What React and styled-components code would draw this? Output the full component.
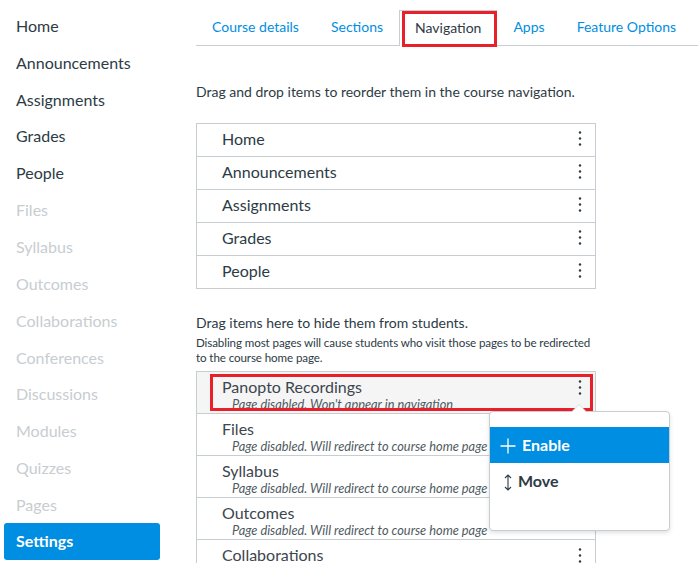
import React from 'react';
import styled, { createGlobalStyle } from 'styled-components';

const Global = createGlobalStyle`
  html, body {
    margin: 0;
    padding: 0;
    overflow: hidden;
    background: #fff;
    font-family: Lato, "Open Sans", sans-serif;
    color: #2d3b45;
  }
`;

const Page = styled.div`
  display: flex;
  width: 698px;
  height: 563px;
  overflow: hidden;
`;

const Sidebar = styled.nav`
  width: 156px;
  padding: 7px 36px 0 4px;
  flex-shrink: 0;
`;

const NavItem = styled.div`
  height: 36.85px;
  display: flex;
  align-items: center;
  padding-left: 12px;
  font-size: 16px;
  border-radius: 3px;
  color: ${p => (p.$disabled ? '#c7cdd1' : '#2d3b45')};
  ${p => p.$active && `
    background: #008ee2;
    color: #fff;
    font-weight: 700;
    padding-bottom: 2px;
    box-sizing: border-box;
  `}
`;

const Main = styled.main`
  flex: 1;
  min-width: 0;
`;

const TabBar = styled.div`
  display: flex;
  align-items: flex-end;
  height: 45px;
  border-bottom: 1px solid #c7cdd1;
`;

const Tab = styled.div`
  position: relative;
  height: 35px;
  padding: 0 16px 2px;
  box-sizing: border-box;
  display: flex;
  align-items: center;
  font-size: 14px;
  white-space: nowrap;
  color: ${p => (p.$active ? '#2d3b45' : '#008ee2')};
  ${p => p.$active && `
    background: #fff;
    border: 1px solid #c7cdd1;
    border-bottom: none;
    height: 36px;
    margin-bottom: -1px;
    padding: 0 15px 2px;
    &::after {
      content: '';
      position: absolute;
      left: 2px;
      right: -1px;
      top: 0;
      bottom: -1px;
      border: 3px solid #e8202a;
    }
  `}
`;

const Content = styled.div`
  width: 400px;
`;

const Lead = styled.p`
  margin: ${p => p.$top || 0}px 0 0;
  font-size: 14px;
  line-height: 20px;
`;

const Note = styled.p`
  margin: 2px 0 0;
  font-size: 11.6px;
  letter-spacing: -0.1px;
  line-height: 15px;
`;

const List = styled.div`
  position: relative;
  margin-top: ${p => p.$top}px;
  border: 1px solid #c7cdd1;
  border-bottom: ${p => (p.$open ? 'none' : '1px solid #c7cdd1')};
`;

const Row = styled.div`
  height: 32px;
  box-sizing: border-box;
  padding: 0 13px 3px 25px;
  display: flex;
  align-items: center;
  justify-content: space-between;
  font-size: 16px;
  & + & {
    border-top: 1px solid #c7cdd1;
    height: 33px;
  }
`;

const HiddenRow = styled.div`
  position: relative;
  height: 41px;
  padding: 5px 13px 0 25px;
  box-sizing: border-box;
  display: flex;
  justify-content: space-between;
  align-items: flex-start;
  background: ${p => (p.$marked ? '#f5f5f5' : '#fff')};
  & + & {
    border-top: 1px solid #c7cdd1;
    height: 42px;
  }
  ${p => p.$marked && `
    &::after {
      content: '';
      position: absolute;
      left: 13px;
      right: 2px;
      top: 2px;
      bottom: 2px;
      border: 3px solid #e8202a;
    }
  `}
`;

const RowTitle = styled.div`
  font-size: 16px;
  line-height: 20px;
  color: #3d464d;
`;

const RowSub = styled.div`
  font-size: 12.8px;
  line-height: 14px;
  font-style: italic;
  color: #4f5a61;
  padding-left: 10px;
  white-space: nowrap;
`;

const KebabWrap = styled.span`
  display: flex;
  height: 20px;
  align-items: center;
`;

const Kebab = () => (
  <KebabWrap>
    <svg width="4" height="15" viewBox="0 0 4 15">
      <circle cx="2" cy="1.5" r="1.2" fill="#2d3b45" />
      <circle cx="2" cy="7.5" r="1.2" fill="#2d3b45" />
      <circle cx="2" cy="13.5" r="1.2" fill="#2d3b45" />
    </svg>
  </KebabWrap>
);

const Menu = styled.div`
  position: absolute;
  left: 292px;
  top: 39px;
  width: 179px;
  height: 103px;
  padding-top: 15px;
  background: #fff;
  border: 1px solid #c7cdd1;
  border-radius: 4px;
  box-shadow: 0 2px 4px rgba(0, 0, 0, 0.12);
  z-index: 2;
  &::before, &::after {
    content: '';
    position: absolute;
    left: 82px;
    border: 7px solid transparent;
    border-top: none;
  }
  &::before {
    top: -8px;
    border-bottom: 7px solid #d7dbde;
  }
  &::after {
    top: -7px;
    border-bottom: 7px solid #fff;
  }
`;

const MenuItem = styled.div`
  height: 36px;
  box-sizing: border-box;
  padding: 0 0 2px ${p => (p.$narrow ? 14 : 10)}px;
  display: flex;
  align-items: center;
  gap: 6px;
  font-size: 16px;
  font-weight: 700;
  background: ${p => (p.$active ? '#008ee2' : 'transparent')};
  color: ${p => (p.$active ? '#fff' : '#2d3b45')};
`;

const Icon = styled.span`
  display: flex;
  width: ${p => p.$w}px;
  justify-content: center;
  padding-top: 4px;
`;

const PlusIcon = () => (
  <Icon $w={16}>
    <svg width="16" height="16" viewBox="0 0 16 16">
      <path d="M8 0.5V15.5M0.5 8H15.5" stroke="#fff" strokeWidth="1.3" fill="none" />
    </svg>
  </Icon>
);

const MoveIcon = () => (
  <Icon $w={8}>
    <svg width="8" height="17" viewBox="0 0 8 17">
      <path d="M4 1V16M1 4L4 1L7 4M1 13L4 16L7 13" stroke="#2d3b45" strokeWidth="1.1" fill="none" />
    </svg>
  </Icon>
);

const nav = [
  ['Home'], ['Announcements'], ['Assignments'], ['Grades'], ['People'],
  ['Files', 1], ['Syllabus', 1], ['Outcomes', 1], ['Collaborations', 1],
  ['Conferences', 1], ['Discussions', 1], ['Modules', 1], ['Quizzes', 1], ['Pages', 1],
];

const tabs = ['Course details', 'Sections', 'Navigation', 'Apps', 'Feature Options'];
const enabled = ['Home', 'Announcements', 'Assignments', 'Grades', 'People'];
const redirect = 'Page disabled. Will redirect to course home page';
const hidden = [
  ['Panopto Recordings', "Page disabled. Won't appear in navigation", true],
  ['Files', redirect],
  ['Syllabus', redirect],
  ['Outcomes', redirect],
  ['Collaborations', redirect],
];

export default function App() {
  return (
    <Page>
      <Global />
      <Sidebar>
        {nav.map(([label, off]) => (
          <NavItem key={label} $disabled={!!off}>{label}</NavItem>
        ))}
        <NavItem $active>Settings</NavItem>
      </Sidebar>
      <Main>
        <TabBar>
          {tabs.map(t => (
            <Tab key={t} $active={t === 'Navigation'}>{t}</Tab>
          ))}
        </TabBar>
        <Content>
          <Lead $top={36}>Drag and drop items to reorder them in the course navigation.</Lead>
          <List $top={21}>
            {enabled.map(item => (
              <Row key={item}>
                {item}
                <Kebab />
              </Row>
            ))}
          </List>
          <Lead $top={24}>Drag items here to hide them from students.</Lead>
          <Note>
            Disabling most pages will cause students who visit those pages to be redirected
            to the course home page.
          </Note>
          <List $top={6} $open>
            {hidden.map(([title, sub, marked]) => (
              <HiddenRow key={title} $marked={marked}>
                <div>
                  <RowTitle>{title}</RowTitle>
                  <RowSub>{sub}</RowSub>
                </div>
                <Kebab />
              </HiddenRow>
            ))}
            <Menu>
              <MenuItem $active>
                <PlusIcon />
                Enable
              </MenuItem>
              <MenuItem $narrow>
                <MoveIcon />
                Move
              </MenuItem>
            </Menu>
          </List>
        </Content>
      </Main>
    </Page>
  );
}
